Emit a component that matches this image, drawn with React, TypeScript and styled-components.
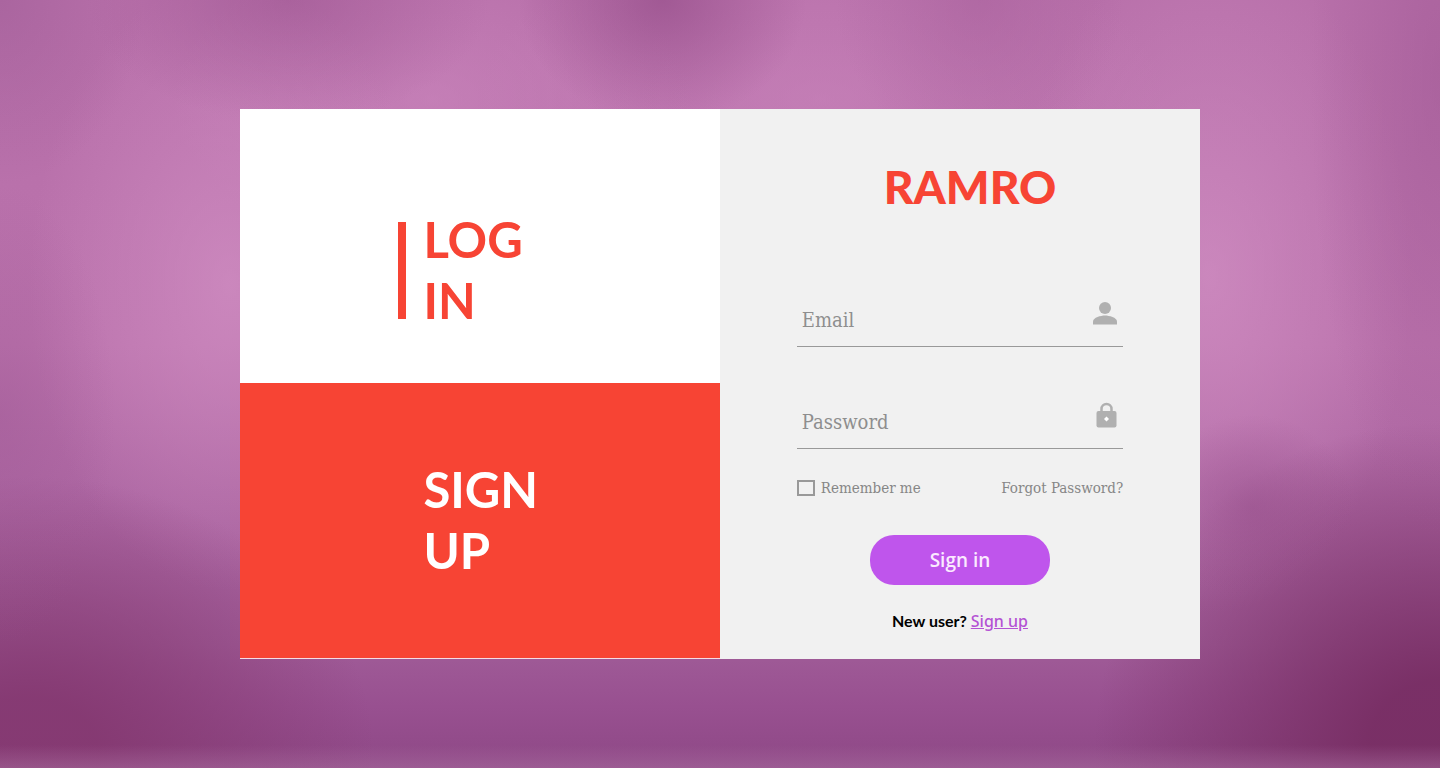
import React from "react";
import styled, { createGlobalStyle } from "styled-components";

const red = "#f74434";
const grey = "#8e8e8e";
const sans = `Lato, "Open Sans", sans-serif`;
const serif = `"DejaVu Serif Condensed", "DejaVu Serif", serif`;

const GlobalStyle = createGlobalStyle`
  *, *::before, *::after { box-sizing: border-box; }
  body { margin: 0; }
  button, input { font: inherit; margin: 0; }
`;

const Page = styled.main`
  min-height: 100vh;
  display: grid;
  place-items: center;
  font-family: ${sans};
  background:
    linear-gradient(transparent 97%, rgba(170, 110, 160, 0.5) 100%),
    radial-gradient(ellipse 10% 16% at 46% 0%, rgba(150, 78, 138, 0.7), transparent),
    radial-gradient(ellipse 14% 16% at 20% 0%, rgba(156, 84, 144, 0.55), transparent),
    radial-gradient(ellipse 10% 20% at 68% 0%, rgba(164, 92, 152, 0.45), transparent),
    radial-gradient(ellipse 10% 24% at 0% 0%, rgba(156, 90, 148, 0.5), transparent),
    radial-gradient(ellipse 9% 60% at 100% 10%, rgba(160, 88, 148, 0.55), transparent),
    radial-gradient(ellipse 7% 12% at 87% 66%, rgba(150, 78, 138, 0.55), transparent),
    radial-gradient(ellipse 8% 30% at 0% 54%, rgba(156, 86, 146, 0.4), transparent),
    radial-gradient(ellipse 24% 36% at 2% 98%, rgba(132, 56, 112, 0.9) 20%, transparent),
    radial-gradient(ellipse 24% 42% at 100% 97%, rgba(120, 46, 100, 0.95) 20%, transparent),
    radial-gradient(ellipse 14% 44% at 84% 36%, rgba(210, 144, 196, 0.7), transparent),
    radial-gradient(ellipse 14% 40% at 16% 37%, rgba(210, 144, 196, 0.7), transparent),
    radial-gradient(ellipse 18% 20% at 30% 13%, rgba(206, 138, 192, 0.55), transparent),
    radial-gradient(ellipse 24% 22% at 57% 13%, rgba(206, 138, 192, 0.5), transparent),
    linear-gradient(#b870aa 0%, #ba72ac 45%, #ac66a2 66%, #a05c98 84%, #985090 92%, #8e4886 100%);
`;

const Card = styled.section`
  width: 66.667%;
  min-height: 550px;
  display: grid;
  grid-template-columns: 1fr 1fr;
  background: #fff;
`;

const Choices = styled.nav`
  display: grid;
  grid-template-rows: 274fr 275fr;
  border-bottom: 1px solid #f6dce4;
`;

const Choice = styled.button<{ $active?: boolean }>`
  display: flex;
  align-items: center;
  gap: 17px;
  padding: ${(p) => (p.$active ? "48px 0 0 33%" : "0 0 2px 33%")};
  border: 0;
  background: ${(p) => (p.$active ? "#fff" : red)};
  color: ${(p) => (p.$active ? red : "#fff")};
  font-size: 49px;
  font-weight: 700;
  line-height: 61px;
  text-align: left;
  cursor: pointer;
`;

const Marker = styled.span<{ $active?: boolean }>`
  width: 8px;
  height: 97px;
  background: ${(p) => (p.$active ? red : "transparent")};
`;

const Line = styled.span`
  display: block;
`;

const Form = styled.form`
  display: flex;
  flex-direction: column;
  align-items: center;
  padding: 48px 16% 24px;
  background: #f1f1f1;
`;

const Brand = styled.h1`
  margin: 0 0 70px;
  padding-left: 20px;
  color: ${red};
  font-family: ${sans};
  font-size: 46px;
  font-weight: 900;
  line-height: 60px;
`;

const Field = styled.label`
  width: 100%;
  height: 60px;
  display: flex;
  align-items: center;
  padding-left: 5px;
  border-bottom: 1px solid #999;

  & + & {
    margin-top: 42px;
  }

  svg {
    flex: none;
    margin-bottom: 6px;
  }
`;

const Input = styled.input`
  flex: 1;
  min-width: 0;
  padding: 6px 0 0;
  border: 0;
  outline: 0;
  background: none;
  color: #555;
  font-family: ${serif};
  font-size: 20px;

  &::placeholder {
    color: ${grey};
    opacity: 1;
  }
`;

const Options = styled.div`
  width: 100%;
  display: flex;
  justify-content: space-between;
  margin: 27px 0 35px;
  color: #868686;
  font-family: ${serif};
  font-size: 15px;
  line-height: 24px;
  white-space: nowrap;
`;

const Remember = styled.label`
  display: flex;
  align-items: center;
  gap: 6px;
`;

const Checkbox = styled.input`
  appearance: none;
  width: 18px;
  height: 16px;
  border: 2px solid #999;

  &:checked {
    background: #999;
  }
`;

const Forgot = styled.a`
  color: inherit;
  text-decoration: none;
`;

const Submit = styled.button`
  width: 180px;
  height: 50px;
  border: 0;
  border-radius: 24px;
  background: #bf55ec;
  color: #fbeaff;
  font-family: "Open Sans", sans-serif;
  font-size: 19px;
  font-weight: 600;
  cursor: pointer;
`;

const NewUser = styled.p`
  margin: 24px 0 0;
  color: #000;
  font-size: 16px;
  font-weight: 700;
  line-height: 24px;

  a {
    color: #b452d4;
    font-family: "Noto Sans", sans-serif;
    font-weight: 500;
  }
`;

const PersonIcon = () => (
  <svg width="36" height="36" viewBox="0 0 36 36" fill="#b0b0b0" aria-hidden="true">
    <circle cx="18" cy="12" r="6" />
    <path d="M6 28.5v-3c0-4 8-6 12-6s12 2 12 6v3z" />
  </svg>
);

const LockIcon = () => (
  <svg width="36" height="36" viewBox="0 0 36 36" aria-hidden="true">
    <path d="M14.5 14v-3a5 5 0 0 1 10 0v3" fill="none" stroke="#b0b0b0" strokeWidth="2.5" />
    <rect x="9.5" y="13" width="20" height="16.5" rx="2" fill="#b0b0b0" />
    <path d="M19.5 18.5l2.5 2.5-2.5 2.5-2.5-2.5z" fill="#fff" />
  </svg>
);

export default function App() {
  return (
    <Page>
      <GlobalStyle />
      <Card>
        <Choices>
          <Choice type="button" $active>
            <Marker $active />
            <span>
              <Line>LOG</Line>
              <Line>IN</Line>
            </span>
          </Choice>
          <Choice type="button">
            <Marker />
            <span>
              <Line>SIGN</Line>
              <Line>UP</Line>
            </span>
          </Choice>
        </Choices>
        <Form onSubmit={(e) => e.preventDefault()}>
          <Brand>RAMRO</Brand>
          <Field>
            <Input type="email" placeholder="Email" aria-label="Email" />
            <PersonIcon />
          </Field>
          <Field>
            <Input type="password" placeholder="Password" aria-label="Password" />
            <LockIcon />
          </Field>
          <Options>
            <Remember>
              <Checkbox type="checkbox" />
              Remember me
            </Remember>
            <Forgot href="#forgot">Forgot Password?</Forgot>
          </Options>
          <Submit type="submit">Sign in</Submit>
          <NewUser>
            New user? <a href="#signup">Sign up</a>
          </NewUser>
        </Form>
      </Card>
    </Page>
  );
}
